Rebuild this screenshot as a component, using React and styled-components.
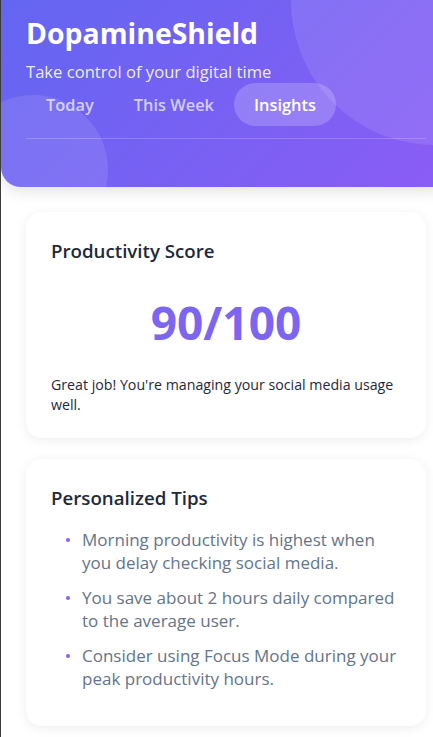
import React from "react";
import styled, { createGlobalStyle } from "styled-components";

const Global = createGlobalStyle`
  html, body {
    margin: 0;
    padding: 0;
    background: #ffffff;
    overflow-x: hidden;
  }
  body {
    border-left: 1px solid #3c3c3c;
    font-family: "Open Sans", "Noto Sans", sans-serif;
  }
  * { box-sizing: border-box; }
`;

const Page = styled.div`
  width: 450px;
  padding-bottom: 20px;
`;

const Header = styled.header`
  position: relative;
  overflow: hidden;
  padding: 16px 25px 48px;
  background: linear-gradient(135deg, #6366f1 0%, #8b5cf6 100%);
  border-radius: 0 0 20px 20px;
  box-shadow: 0 4px 15px rgba(0, 0, 0, 0.12);
  color: #ffffff;
`;

const Bubble = styled.div`
  position: absolute;
  border-radius: 50%;
  background: rgba(255, 255, 255, 0.1);
  width: ${p => p.size}px;
  height: ${p => p.size}px;
  ${p => p.top !== undefined && `top: ${p.top}px;`}
  ${p => p.right !== undefined && `right: ${p.right}px;`}
  ${p => p.left !== undefined && `left: ${p.left}px;`}
  ${p => p.bottom !== undefined && `bottom: ${p.bottom}px;`}
  pointer-events: none;
`;

const Title = styled.h1`
  position: relative;
  margin: 0;
  font-size: 28.4px;
  line-height: 34px;
  font-weight: 700;
`;

const Subtitle = styled.p`
  position: relative;
  margin: 11px 0 0;
  font-size: 16.6px;
  line-height: 22px;
  color: rgba(255, 255, 255, 0.9);
`;

const Tabs = styled.nav`
  position: relative;
  display: flex;
  padding-bottom: 12px;
  border-bottom: 1px solid rgba(255, 255, 255, 0.2);
`;

const Tab = styled.button`
  border: 0;
  padding: 10px 20px;
  border-radius: 22px;
  font-family: inherit;
  font-size: 16.4px;
  line-height: 23px;
  font-weight: 600;
  cursor: pointer;
  background: ${p => (p.active ? "rgba(255, 255, 255, 0.2)" : "transparent")};
  color: ${p => (p.active ? "#ffffff" : "rgba(255, 255, 255, 0.7)")};
`;

const Content = styled.main`
  display: flex;
  flex-direction: column;
  gap: 21px;
  padding: 25px 25px 0;
`;

const Card = styled.section`
  background: #ffffff;
  border-radius: 16px;
  padding: 26px 25px ${p => p.bottom || 25}px;
  box-shadow: 0 2px 12px rgba(0, 0, 0, 0.07);
`;

const CardTitle = styled.h2`
  margin: 0;
  font-size: 18.7px;
  line-height: 25px;
  font-weight: 600;
  color: #1e293b;
`;

const Score = styled.div`
  margin: 30px 0 24px;
  text-align: center;
  font-size: 46px;
  line-height: 58px;
  font-weight: 700;
  color: #7b65f1;
`;

const Note = styled.p`
  margin: 0;
  font-size: 14.2px;
  line-height: 20px;
  color: #1e293b;
`;

const TipList = styled.ul`
  list-style: none;
  margin: 18px 0 0;
  padding: 0 0 0 31px;
  display: flex;
  flex-direction: column;
  gap: 12px;
`;

const Tip = styled.li`
  position: relative;
  font-size: 17px;
  line-height: 23px;
  color: #64748b;

  &::before {
    content: "";
    position: absolute;
    left: -16px;
    top: 10px;
    width: 4px;
    height: 4px;
    border-radius: 50%;
    background: #8b5cf6;
  }
`;

const tabs = ["Today", "This Week", "Insights"];

const tips = [
  "Morning productivity is highest when you delay checking social media.",
  "You save about 2 hours daily compared to the average user.",
  "Consider using Focus Mode during your peak productivity hours.",
];

export default function App() {
  return (
    <Page>
      <Global />
      <Header>
        <Bubble size={288} top={-143} right={-128} />
        <Bubble size={150} left={-43} bottom={-58} />
        <Title>DopamineShield</Title>
        <Subtitle>Take control of your digital time</Subtitle>
        <Tabs>
          {tabs.map(t => (
            <Tab key={t} active={t === "Insights"}>
              {t}
            </Tab>
          ))}
        </Tabs>
      </Header>
      <Content>
        <Card bottom={23}>
          <CardTitle>Productivity Score</CardTitle>
          <Score>90/100</Score>
          <Note>Great job! You're managing your social media usage well.</Note>
        </Card>
        <Card bottom={36}>
          <CardTitle>Personalized Tips</CardTitle>
          <TipList>
            {tips.map(t => (
              <Tip key={t}>{t}</Tip>
            ))}
          </TipList>
        </Card>
      </Content>
    </Page>
  );
}
